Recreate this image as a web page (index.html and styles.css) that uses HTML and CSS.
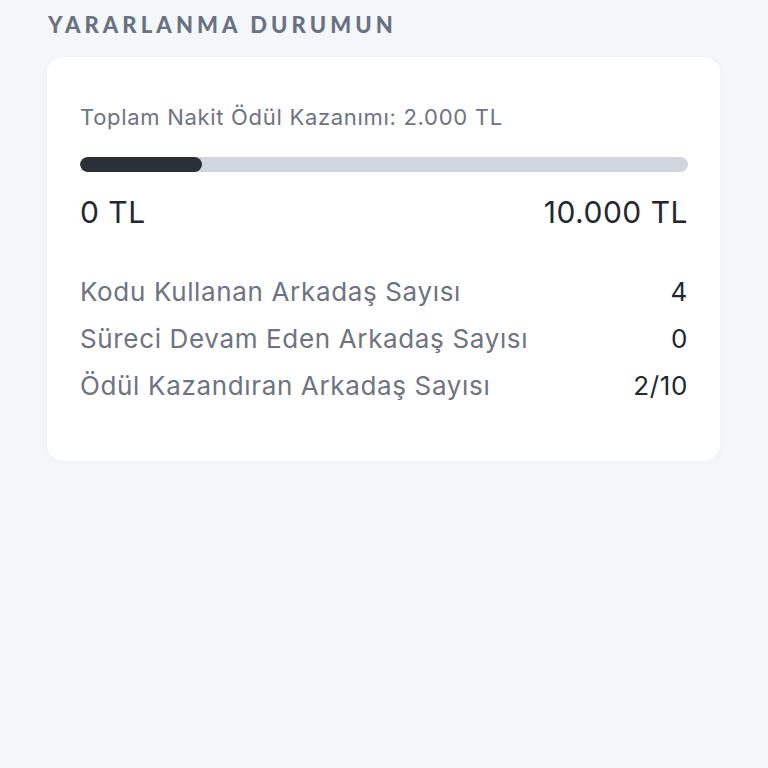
FILE: index.html
```html
<!DOCTYPE html>
<html lang="tr">
<head>
    <meta charset="UTF-8">
    <meta name="viewport" content="width=device-width, initial-scale=1.0">
    <title>Yararlanma Durumun</title>
    <link rel="stylesheet" href="styles.css">
</head>
<body>
    <section class="usage">
        <h2 class="usage-title">YARARLANMA DURUMUN</h2>

        <div class="usage-card">
            <p class="total">Toplam Nakit Ödül Kazanımı: 2.000 TL</p>

            <div class="progress">
                <div class="progress-fill" style="width: 20%"></div>
            </div>

            <div class="range">
                <span>0 TL</span>
                <span>10.000 TL</span>
            </div>

            <ul class="stats">
                <li class="stat-row">
                    <span class="stat-label">Kodu Kullanan Arkadaş Sayısı</span>
                    <span class="stat-value">4</span>
                </li>
                <li class="stat-row">
                    <span class="stat-label">Süreci Devam Eden Arkadaş Sayısı</span>
                    <span class="stat-value">0</span>
                </li>
                <li class="stat-row">
                    <span class="stat-label">Ödül Kazandıran Arkadaş Sayısı</span>
                    <span class="stat-value">2/10</span>
                </li>
            </ul>
        </div>
    </section>
</body>
</html>
```

FILE: styles.css
```css
:root {
    --page-bg: #f4f7fa;
    --card-bg: #ffffff;
    --title: #6a7182;
    --muted: #6e7380;
    --ink: #23272e;
    --track: #d0d6de;
    --fill: #2a3038;
}

body {
    margin: 0;
    background: var(--page-bg);
    font-family: 'Inter', 'Noto Sans', sans-serif;
    min-height: 100vh;
}

/* section */
.usage {
    padding: 10px 48px 0 47px;
}

.usage-title {
    margin: 0 0 17px 1px;
    font-family: 'Lato', 'Open Sans', sans-serif;
    font-weight: 900;
    font-size: 22px;
    line-height: 30px;
    letter-spacing: 4.1px;
    color: var(--title);
}

/* card */
.usage-card {
    background: var(--card-bg);
    border-radius: 16px;
    padding: 47px 32px 52px 33px;
    box-shadow: 0 1px 6px rgba(30, 40, 60, 0.03);
}

.total {
    margin: 0;
    font-size: 22px;
    line-height: 26px;
    letter-spacing: 0.7px;
    color: var(--muted);
}

.progress {
    margin-top: 27px;
    height: 15px;
    border-radius: 8px;
    background: var(--track);
    overflow: hidden;
}

.progress-fill {
    height: 100%;
    border-radius: 8px;
    background: var(--fill);
}

.range {
    display: flex;
    justify-content: space-between;
    margin-top: 22px;
    font-size: 30px;
    line-height: 36px;
    letter-spacing: 0.5px;
    color: var(--ink);
}

/* stats */
.stats {
    list-style: none;
    margin: 38px 0 0;
    padding: 0;
}

.stat-row {
    display: flex;
    justify-content: space-between;
    font-size: 26px;
    line-height: 47px;
    letter-spacing: 0.65px;
}

.stat-label {
    color: var(--muted);
}

.stat-value {
    color: var(--ink);
}
```
